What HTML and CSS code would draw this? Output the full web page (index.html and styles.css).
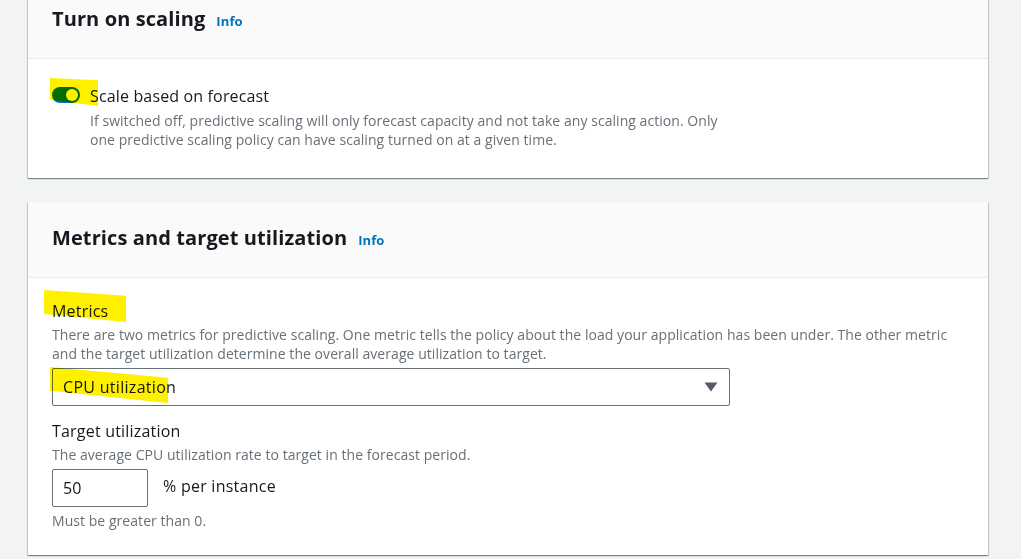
FILE: index.html
```html
<!DOCTYPE html>
<html>
<head>
<meta charset="utf-8">
<link rel="stylesheet" href="styles.css">
</head>
<body>
<div class="page">
  <section class="card card-first">
    <header class="card-header">
      <h2 class="title">Turn on scaling</h2><a class="info">Info</a>
    </header>
    <div class="card-body body-first">
      <div class="toggle-row">
        <span class="toggle"><span class="knob"></span><span class="hl hl-toggle"></span></span>
        <div class="toggle-text">
          <div class="toggle-label">Scale based on forecast</div>
          <div class="desc">If switched off, predictive scaling will only forecast capacity and not take any scaling action. Only<br>one predictive scaling policy can have scaling turned on at a given time.</div>
        </div>
      </div>
    </div>
  </section>

  <section class="card">
    <header class="card-header">
      <h2 class="title">Metrics and target utilization</h2><a class="info">Info</a>
    </header>
    <div class="card-body body-second">
      <div class="field">
        <div class="label"><span class="hl hl-metrics"></span>Metrics</div>
        <div class="desc">There are two metrics for predictive scaling. One metric tells the policy about the load your application has been under. The other metric<br>and the target utilization determine the overall average utilization to target.</div>
        <div class="select">
          <span class="hl hl-cpu"></span>
          <span class="select-value">CPU utilization</span>
          <svg class="caret" width="14" height="10" viewBox="0 0 14 10"><path d="M0.5 0.5 H13.5 L7 9.5 Z" fill="#545b64"/></svg>
        </div>
      </div>
      <div class="field field-target">
        <div class="label">Target utilization</div>
        <div class="desc">The average CPU utilization rate to target in the forecast period.</div>
        <div class="input-row">
          <div class="input">50</div>
          <span class="unit">% per instance</span>
        </div>
        <div class="hint">Must be greater than 0.</div>
      </div>
    </div>
  </section>
</div>
</body>
</html>
```

FILE: styles.css
```css
* { box-sizing: border-box; }
html, body { margin: 0; padding: 0; }
body {
  background: #f2f3f3;
  font-family: "Open Sans", "Noto Sans", sans-serif;
  color: #16191f;
  width: 1021px;
  height: 559px;
  overflow: hidden;
}
.page {
  margin-top: -17px;
  padding-left: 28px;
  width: 988px;
  display: flex;
  flex-direction: column;
  gap: 24px;
}
.card {
  background: #fff;
  box-shadow: 0 1px 1px 0 rgba(0,28,36,.3), 1px 1px 1px 0 rgba(0,28,36,.15), -1px 1px 1px 0 rgba(0,28,36,.15);
}
.card-header {
  background: #fafafa;
  border-bottom: 1px solid #eaeded;
  height: 76px;
  padding: 0 24px 4px;
  display: flex;
  align-items: center;
  gap: 11px;
}
.title {
  margin: 0;
  font-size: 20px;
  font-weight: 700;
  line-height: 28px;
  letter-spacing: 0.1px;
}
.info {
  color: #0073bb;
  font-size: 13px;
  font-weight: 700;
  padding-top: 5px;
  letter-spacing: 0.1px;
}
.card-body { padding: 0 24px; position: relative; }
.body-first { height: 119px; padding-top: 26px; }
.body-second { height: 277px; padding-top: 22px; }

.toggle-row { display: flex; gap: 10px; align-items: flex-start; }
.toggle {
  position: relative;
  margin-top: 2px;
  width: 28px;
  height: 16px;
  border-radius: 8px;
  background: #0073bb;
  flex: none;
}
.knob {
  position: absolute;
  right: 2px;
  top: 2px;
  width: 12px;
  height: 12px;
  border-radius: 50%;
  background: #fff;
}
.toggle-label { font-size: 16px; line-height: 22px; letter-spacing: 0.15px; }
.desc {
  color: #687078;
  font-size: 14px;
  line-height: 19px;
  letter-spacing: 0.05px;
  margin-top: 3px;
}
.toggle-text .desc { margin-top: 4px; }
.label { font-size: 16px; line-height: 22px; position: relative; letter-spacing: 0.2px; }
.select {
  position: relative;
  margin-top: 5px;
  width: 678px;
  height: 38px;
  border: 1px solid #687078;
  border-radius: 2px;
  display: flex;
  align-items: center;
  justify-content: space-between;
  padding: 0 11px 0 10px;
}
.select-value { font-size: 16px; letter-spacing: 0.3px; }
.field-target { margin-top: 14px; }
.input-row { display: flex; align-items: center; gap: 15px; margin-top: 5px; }
.input {
  width: 96px;
  height: 38px;
  border: 1px solid #687078;
  border-radius: 2px;
  font-size: 16px;
  padding: 8px 10px;
  line-height: 20px;
}
.unit { font-size: 16px; margin-top: -4px; letter-spacing: 0.25px; }
.hint { color: #687078; font-size: 14px; line-height: 20px; margin-top: 4px; letter-spacing: 0.05px; }

.hl {
  position: absolute;
  background: #fff000;
  mix-blend-mode: multiply;
  pointer-events: none;
}
.hl-toggle { left: -2px; top: -9px; width: 48px; height: 28px; clip-path: polygon(0 0, 100% 8%, 100% 100%, 0 78%); }
.hl-metrics { left: -8px; top: -10px; width: 82px; height: 32px; clip-path: polygon(0 0, 100% 18%, 100% 100%, 0 75%); }
.hl-cpu { left: -3px; top: -2px; width: 118px; height: 36px; clip-path: polygon(0 0, 100% 30%, 100% 100%, 0 66%); }
```
